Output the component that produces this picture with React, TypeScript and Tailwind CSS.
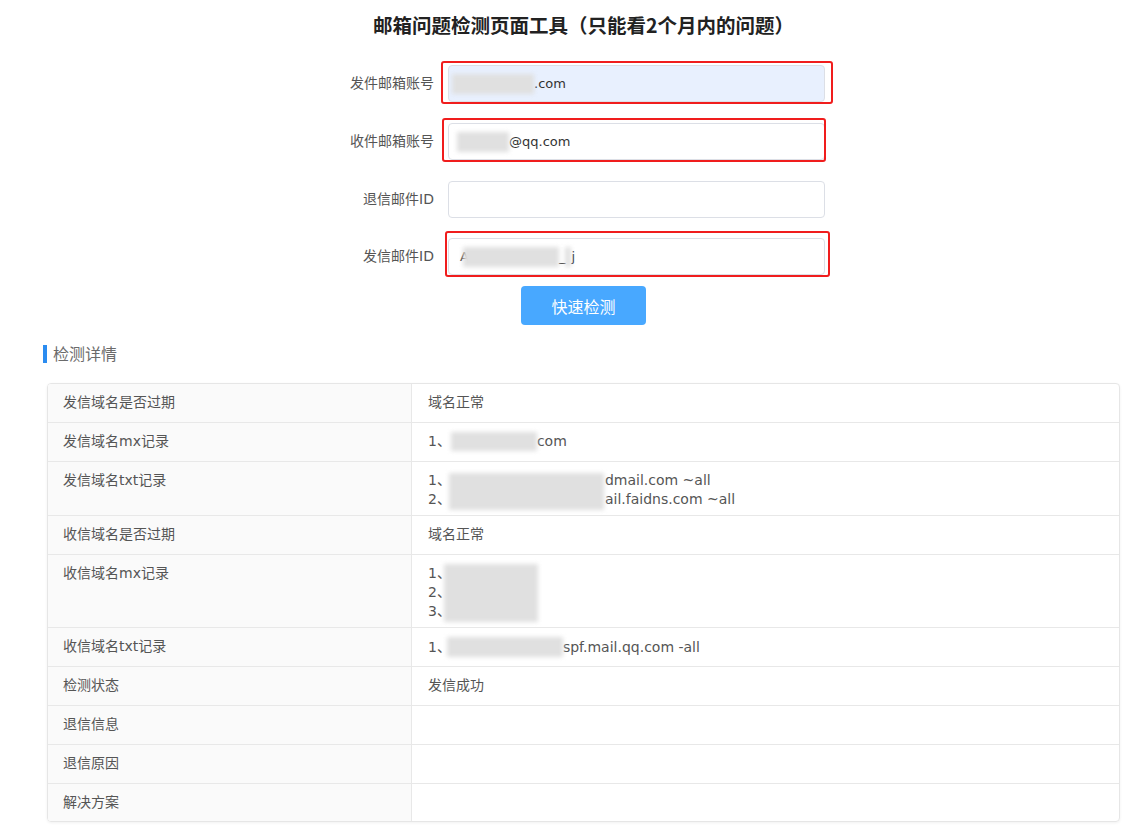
import React from "react";

const Blur = ({ w, h = 18, className = "" }: { w: number; h?: number; className?: string }) => (
  <span
    className={`inline-block align-middle bg-[#e0e0e0] blur-[2px] ${className}`}
    style={{ width: w, height: h }}
  />
);

type Row = { label: string; value: React.ReactNode };

const rows: Row[] = [
  { label: "发信域名是否过期", value: <div>域名正常</div> },
  {
    label: "发信域名mx记录",
    value: (
      <div className="flex items-center">
        <span>1、</span>
        <Blur w={86} h={19} />
        <span>com</span>
      </div>
    ),
  },
  {
    label: "发信域名txt记录",
    value: (
      <div className="relative">
        <div className="flex">
          <span>1、</span>
          <span className="inline-block w-[154px]" />
          <span>dmail.com ~all</span>
        </div>
        <div className="flex">
          <span>2、</span>
          <span className="inline-block w-[154px]" />
          <span>ail.faidns.com ~all</span>
        </div>
        <span className="absolute left-[21px] top-[2px] h-[37px] w-[155px] bg-[#e0e0e0] blur-[2px]" />
      </div>
    ),
  },
  { label: "收信域名是否过期", value: <div>域名正常</div> },
  {
    label: "收信域名mx记录",
    value: (
      <div className="relative">
        <div>1、</div>
        <div>2、</div>
        <div>3、</div>
        <span className="absolute left-[16px] top-[0px] h-[58px] w-[94px] bg-[#e0e0e0] blur-[2px]" />
      </div>
    ),
  },
  {
    label: "收信域名txt记录",
    value: (
      <div className="flex items-center">
        <span>1、</span>
        <Blur w={116} h={20} className="-ml-[4px]" />
        <span>spf.mail.qq.com -all</span>
      </div>
    ),
  },
  { label: "检测状态", value: <div>发信成功</div> },
  { label: "退信信息", value: null },
  { label: "退信原因", value: null },
  { label: "解决方案", value: null },
];

const FormRow = ({
  label,
  children,
  bg = "bg-white",
  red,
}: {
  label: string;
  children?: React.ReactNode;
  bg?: string;
  red?: string;
}) => (
  <div className="flex items-center h-[37px]">
    <div className="w-[434px] text-right text-[14px] text-[#555]">{label}</div>
    <div className="relative ml-[14px] w-[377px] h-[37px]">
      <div
        className={`h-full w-full rounded-[4px] border border-[#dcdfe6] ${bg} flex items-center pl-[9px] text-[13px] text-[#333] overflow-hidden`}
      >
        {children}
      </div>
      {red ? <div className={`absolute rounded-[3px] border-2 border-[#f01d1d] pointer-events-none ${red}`} /> : null}
    </div>
  </div>
);

export default function App() {
  return (
    <div className="w-[1136px] min-h-[828px] bg-white font-['DejaVu_Sans','Noto_Sans_CJK_SC',sans-serif] text-[#555]">
      <div className="pt-[11px] pl-[373px]">
        <h1 className="text-[19.5px] leading-[28px] font-bold text-[#222] font-['Noto_Sans_CJK_SC','DejaVu_Sans',sans-serif]">
          邮箱问题检测页面工具（只能看2个月内的问题）
        </h1>
      </div>

      <div className="mt-[26px] flex flex-col gap-[21px]">
        <FormRow label="发件邮箱账号" bg="bg-[#e8f0fe]" red="-left-[7px] -right-[8px] -top-[4px] -bottom-[2px]">
          <Blur w={82} h={20} className="-ml-[6px]" />
          <span>.com</span>
        </FormRow>
        <FormRow label="收件邮箱账号" red="-left-[6px] -right-[1px] -top-[5px] -bottom-[2px]">
          <Blur w={52} h={20} className="-ml-[1px]" />
          <span>@qq.com</span>
        </FormRow>
        <FormRow label="退信邮件ID" />
        <div className="-mt-[1px]">
          <FormRow label="发信邮件ID" red="-left-[3px] -right-[5px] -top-[7px] -bottom-[2px]">
            <span className="ml-[2px]">A</span>
            <Blur w={96} h={20} className="-ml-[6px]" />
            <span>_</span>
            <Blur w={6} h={20} />
            <span>j</span>
          </FormRow>
        </div>
      </div>

      <div className="mt-[11px] pl-[521px]">
        <button className="w-[125px] h-[39px] rounded-[4px] bg-[#48a8ff] text-white text-[16px] font-['Noto_Sans_CJK_SC',sans-serif]">
          快速检测
        </button>
      </div>

      <div className="mt-[20px] ml-[43px] flex items-center h-[18px]">
        <span className="w-[4px] h-[18px] bg-[#2b8cf0]" />
        <span className="ml-[6px] text-[16px] leading-[22px] text-[#6b6b6b] translate-y-[1px]">检测详情</span>
      </div>

      <div className="mt-[20px] ml-[47px] w-[1073px] rounded-[4px] border border-[#e6e6e6] shadow-[0_1px_3px_rgba(0,0,0,0.06)] overflow-hidden text-[14px] leading-[19px]">
        {rows.map((r, i) => (
          <div
            key={r.label}
            className={`flex ${i < rows.length - 1 ? "min-h-[39px] border-b border-[#e8e8e8]" : "min-h-[37px]"}`}
          >
            <div className="w-[364px] shrink-0 bg-[#fafafa] border-r border-[#e8e8e8] pl-[15px] pt-[9px] pb-[6px] text-[#555]">
              {r.label}
            </div>
            <div className="flex-1 pl-[16px] pt-[9px] pb-[6px] text-[#555]">{r.value}</div>
          </div>
        ))}
      </div>
    </div>
  );
}
